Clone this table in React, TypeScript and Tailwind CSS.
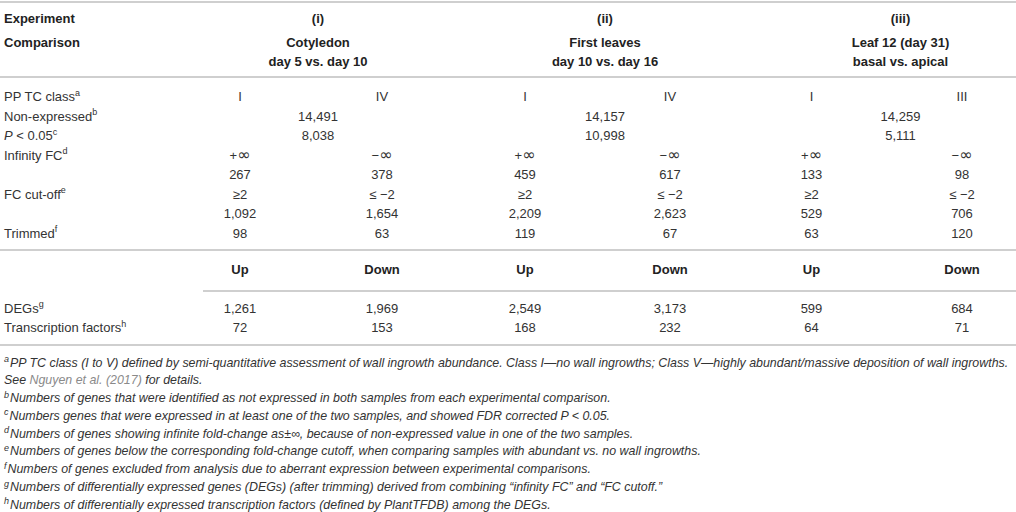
import React from 'react'

type Cell = { v: React.ReactNode; span?: boolean }

// column tracks: label + six sub-columns (last one runs past the crop)
const grid = 'grid grid-cols-[176px_128px_156px_130px_160px_123px_178px] w-[1051px]'

const Sup = ({ children }: { children: React.ReactNode }) => (
  <sup className="text-[9px] top-[-0.6em]">{children}</sup>
)

const Inf = ({ sign }: { sign: string }) => (
  <span>
    {sign}
    <span className="font-['DejaVu_Sans',sans-serif] text-[16px] leading-none">∞</span>
  </span>
)

const six = (vals: React.ReactNode[]): Cell[] => vals.map((v) => ({ v }))
const three = (vals: React.ReactNode[]): Cell[] => vals.map((v) => ({ v, span: true }))

const plus = <Inf sign="+" />
const minus = <Inf sign="−" />

const rows: { label: React.ReactNode; cells: Cell[] }[] = [
  { label: <>PP TC class<Sup>a</Sup></>, cells: six(['I', 'IV', 'I', 'IV', 'I', 'III']) },
  { label: <>Non-expressed<Sup>b</Sup></>, cells: three(['14,491', '14,157', '14,259']) },
  { label: <><i>P</i> &lt; 0.05<Sup>c</Sup></>, cells: three(['8,038', '10,998', '5,111']) },
  { label: <>Infinity FC<Sup>d</Sup></>, cells: six([plus, minus, plus, minus, plus, minus]) },
  { label: '', cells: six(['267', '378', '459', '617', '133', '98']) },
  { label: <>FC cut-off<Sup>e</Sup></>, cells: six(['≥2', '≤ −2', '≥2', '≤ −2', '≥2', '≤ −2']) },
  { label: '', cells: six(['1,092', '1,654', '2,209', '2,623', '529', '706']) },
  { label: <>Trimmed<Sup>f</Sup></>, cells: six(['98', '63', '119', '67', '63', '120']) },
]

const degRows: { label: React.ReactNode; cells: Cell[] }[] = [
  { label: <>DEGs<Sup>g</Sup></>, cells: six(['1,261', '1,969', '2,549', '3,173', '599', '684']) },
  { label: <>Transcription factors<Sup>h</Sup></>, cells: six(['72', '153', '168', '232', '64', '71']) },
]

function Row({ label, cells }: { label: React.ReactNode; cells: Cell[] }) {
  return (
    <>
      <div className="pl-[4px] whitespace-nowrap">{label}</div>
      {cells.map((c, i) => (
        <div key={i} className={`text-center whitespace-nowrap ${c.span ? 'col-span-2' : ''}`}>
          {c.v}
        </div>
      ))}
    </>
  )
}

const notes: { k: string; text: React.ReactNode }[] = [
  {
    k: 'a',
    text: (
      <>
        PP TC class (I to V) defined by semi-quantitative assessment of wall ingrowth abundance. Class I—no wall
        ingrowths; Class V—highly abundant/massive deposition of wall ingrowths. See{' '}
        <span className="text-[#8a8a8a]">Nguyen et al. (2017)</span> for details.
      </>
    ),
  },
  { k: 'b', text: 'Numbers of genes that were identified as not expressed in both samples from each experimental comparison.' },
  { k: 'c', text: 'Numbers genes that were expressed in at least one of the two samples, and showed FDR corrected P < 0.05.' },
  { k: 'd', text: 'Numbers of genes showing infinite fold-change as±∞, because of non-expressed value in one of the two samples.' },
  { k: 'e', text: 'Numbers of genes below the corresponding fold-change cutoff, when comparing samples with abundant vs. no wall ingrowths.' },
  { k: 'f', text: 'Numbers of genes excluded from analysis due to aberrant expression between experimental comparisons.' },
  { k: 'g', text: 'Numbers of differentially expressed genes (DEGs) (after trimming) derived from combining “infinity FC” and “FC cutoff.”' },
  { k: 'h', text: 'Numbers of differentially expressed transcription factors (defined by PlantTFDB) among the DEGs.' },
]

export default function App() {
  return (
    <div className="w-[1016px] h-[512px] overflow-hidden bg-white text-[#333] text-[13px] font-['Liberation_Sans',Arial,sans-serif]">
      <div className="pt-[1px]">
        {/* Header */}
        <div className="border-t-2 border-b-2 border-[#cfcfcf] pt-[6px] pb-[5px] leading-[19px] font-bold text-[#222]">
          <div className={grid}>
            <div className="pl-[4px]">Experiment</div>
            <div className="col-span-2 text-center">(i)</div>
            <div className="col-span-2 text-center">(ii)</div>
            <div className="col-span-2 text-center">(iii)</div>
          </div>
          <div className={`${grid} mt-[5px]`}>
            <div className="pl-[4px]">Comparison</div>
            <div className="col-span-2 text-center">
              Cotyledon
              <br />
              day 5 vs. day 10
            </div>
            <div className="col-span-2 text-center">
              First leaves
              <br />
              day 10 vs. day 16
            </div>
            <div className="col-span-2 text-center">
              Leaf 12 (day 31)
              <br />
              basal vs. apical
            </div>
          </div>
        </div>

        {/* Body */}
        <div className="border-b-2 border-[#cfcfcf] pt-[9px] pb-[6px] leading-[19.5px]">
          <div className={grid}>
            {rows.map((r, i) => (
              <Row key={i} {...r} />
            ))}
          </div>
        </div>

        {/* Up / Down */}
        <div className="border-b-2 border-[#cfcfcf] pt-[9px] pb-[6px] leading-[19.5px]">
          <div className={`${grid} font-bold text-[#222]`}>
            <div />
            {['Up', 'Down', 'Up', 'Down', 'Up', 'Down'].map((t, i) => (
              <div key={i} className="text-center">
                {t}
              </div>
            ))}
            <div />
            <div className="col-span-6 ml-[27px] mt-[10px] mb-[7px] border-b-2 border-[#cfcfcf]" />
            {degRows.map((r, i) => (
              <div key={i} className="contents font-normal text-[#333]">
                <Row {...r} />
              </div>
            ))}
          </div>
        </div>

        {/* Footnotes */}
        <div className="pt-[9px] pl-[4px] pr-[6px] text-[12.4px] leading-[17.8px] italic text-[#333]">
          {notes.map((n) => (
            <p key={n.k} className="whitespace-nowrap first:whitespace-normal">
              <sup className="text-[9px] top-[-0.5em] mr-[1px]">{n.k}</sup>
              {n.text}
            </p>
          ))}
        </div>
      </div>
    </div>
  )
}
